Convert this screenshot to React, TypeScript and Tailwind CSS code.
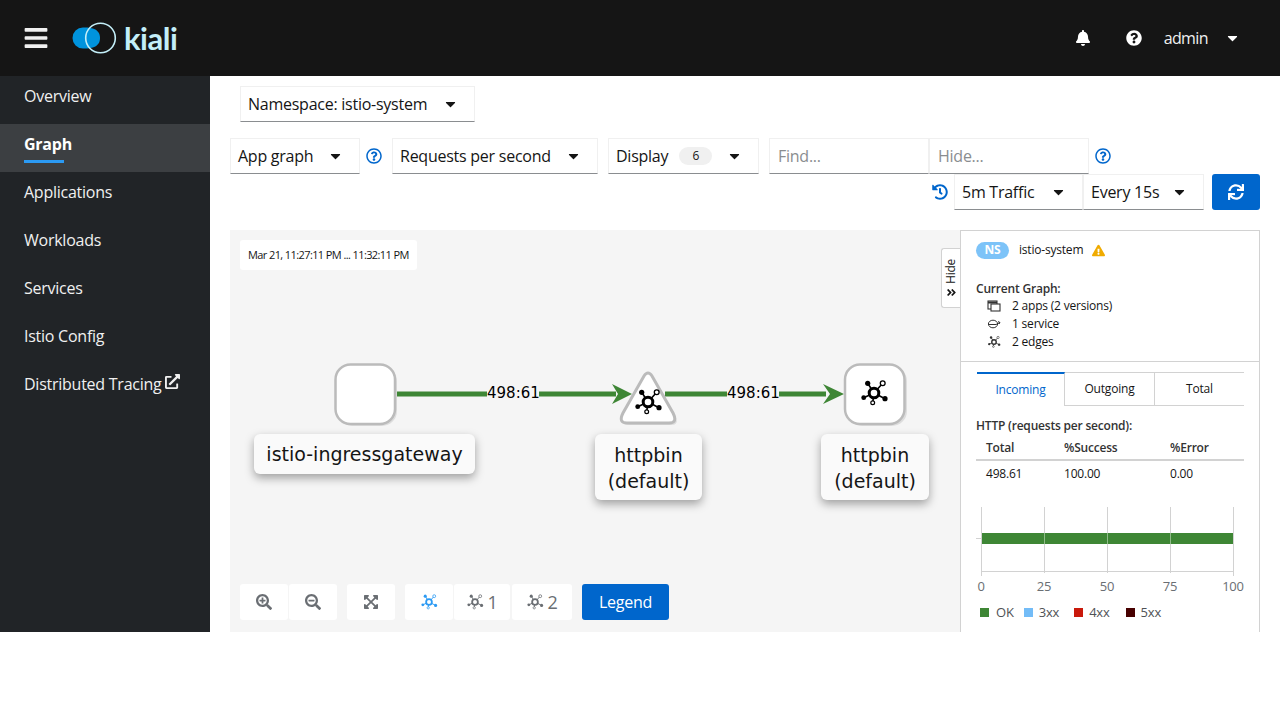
import React from 'react';
import { FaBars, FaBell, FaQuestionCircle, FaRegQuestionCircle, FaCaretDown, FaHistory, FaSync, FaSearchPlus, FaSearchMinus, FaExpandArrowsAlt, FaExternalLinkAlt, FaExclamationTriangle, FaAngleDoubleRight } from 'react-icons/fa';

function GraphIcon({ size = 30, color = '#000', className = '' }: { size?: number; color?: string; className?: string }) {
  return (
    <svg width={size} height={size} viewBox="-15 -15 30 30" className={className}>
      <g stroke={color} strokeWidth="1.6" fill="none">
        <path d="M-6.3-9.7L0 0M8.7-9.7L0 0M-10.3 4.7L0 0M11 5.7L0 0M-1.3 9.7L0 0" />
      </g>
      <circle r="4.8" fill="#fff" stroke={color} strokeWidth="3" />
      <circle cx="-6.3" cy="-9.7" r="2.6" fill={color} />
      <circle cx="8.7" cy="-9.7" r="2.4" fill="#fff" stroke={color} strokeWidth="1.3" />
      <circle cx="-10.3" cy="4.7" r="2.4" fill={color} />
      <circle cx="11" cy="5.7" r="2.6" fill={color} />
      <circle cx="-1.3" cy="9.7" r="1.9" fill="#fff" stroke={color} strokeWidth="1.2" />
    </svg>
  );
}

function Dropdown({ label, w, badge }: { label: string; w: string; badge?: string }) {
  return (
    <div className={`${w} h-9 flex items-center justify-between pl-[7px] pr-[17px] border border-[#f0f0f0] border-b-[#8a8d90] text-[16px] text-[#151515] bg-white`}>
      <span className="flex items-center whitespace-nowrap">
        {label}
        {badge && <span className="ml-[11px] w-[33px] h-[18px] rounded-full bg-[#f0f0f0] text-[12px] flex items-center justify-center">{badge}</span>}
      </span>
      <FaCaretDown className="text-[#151515] w-[13px] h-[16px]" />
    </div>
  );
}

const navItems = ['Overview', 'Graph', 'Applications', 'Workloads', 'Services', 'Istio Config'];

function Sidebar() {
  return (
    <nav className="w-[210px] shrink-0 bg-[#212427] text-[16px] text-[#f0f0f0]">
      {navItems.map((n) => (
        <div key={n} className={`h-12 pl-6 pt-[8px] ${n === 'Graph' ? 'bg-[#3c3f42] font-bold text-white' : ''}`}>
          <div className="relative h-6 leading-6">
            {n}
            {n === 'Graph' && <div className="absolute left-0 top-[28px] w-10 h-[3px] bg-[#2b9af3]" />}
          </div>
        </div>
      ))}
      <div className="h-12 pl-6 pt-[8px] flex items-start gap-[4px]">
        <span className="h-6 leading-6">Distributed Tracing</span>
        <FaExternalLinkAlt className="w-[15px] h-[15px] mt-[2px]" />
      </div>
    </nav>
  );
}

function Header() {
  return (
    <header className="h-[76px] bg-[#151515] flex items-center pl-6 pr-0 shrink-0">
      <FaBars className="text-[#f0f0f0] w-[24px] h-[26px]" />
      <div className="ml-[23px] flex items-center">
        <svg width="46" height="36" viewBox="71 20 46 36">
          <path d="M83 27.5C90 27.5 100 28 100 38C100 48 90 48.5 83 48.5A10.5 10.5 0 0 1 83 27.5Z" fill="#0093dd" />
          <circle cx="100.5" cy="38" r="14.8" fill="none" stroke="#c3eef8" strokeWidth="1.6" />
        </svg>
        <span className="ml-[7px] text-[31px] leading-none font-bold text-[#c3eef8] tracking-[-0.5px] font-['Lato',sans-serif]">kiali</span>
      </div>
      <div className="ml-auto flex items-center text-white">
        <FaBell className="w-[16px] h-[16px] mr-[35px]" />
        <FaQuestionCircle className="w-[16px] h-[16px] mr-[22px]" />
        <span className="text-[16px] mr-[18px] tracking-[-0.6px] text-[#f0f0f0]">admin</span>
        <FaCaretDown className="w-[13px] h-[16px] mr-[41px]" />
      </div>
    </header>
  );
}

function Toolbar() {
  return (
    <div className="pl-5 pr-5 shrink-0">
      <div className="pl-[10px] pt-[10px]">
        <Dropdown label="Namespace: istio-system" w="w-[235px]" />
      </div>
      <div className="mt-4 flex items-center">
        <Dropdown label="App graph" w="w-[130px]" />
        <FaRegQuestionCircle className="w-4 h-4 text-[#06c] ml-[6px]" />
        <div className="ml-[10px]"><Dropdown label="Requests per second" w="w-[206px]" /></div>
        <div className="ml-[10px]"><Dropdown label="Display" w="w-[151px]" badge="6" /></div>
        <div className="ml-[10px] w-[160px] h-9 border border-[#f0f0f0] border-b-[#8a8d90] pl-2 flex items-center text-[16px] text-[#8a8d90]">Find...</div>
        <div className="w-[160px] h-9 border border-[#f0f0f0] border-b-[#8a8d90] pl-2 flex items-center text-[16px] text-[#8a8d90]">Hide...</div>
        <FaRegQuestionCircle className="w-4 h-4 text-[#06c] ml-[6px]" />
      </div>
      <div className="flex items-center justify-end">
        <FaHistory className="w-4 h-4 text-[#06c] mr-[6px]" />
        <Dropdown label="5m Traffic" w="w-[129px]" />
        <Dropdown label="Every 15s" w="w-[121px]" />
        <div className="ml-2 w-12 h-9 rounded-[3px] bg-[#06c] flex items-center justify-center">
          <FaSync className="w-4 h-4 text-white" />
        </div>
      </div>
    </div>
  );
}

function Btn({ w, children }: { w: string; children: React.ReactNode }) {
  return <div className={`${w} h-9 bg-white rounded-[3px] flex items-center justify-center text-[#6a6e73] text-[18px]`}>{children}</div>;
}

function Label({ className, lines }: { className: string; lines: string[] }) {
  return (
    <div className={`absolute bg-[#fafafa] rounded-[6px] shadow-[0_4px_10px_rgba(0,0,0,0.35)] text-center text-[#151515] text-[19px] tracking-normal leading-[26px] font-['DejaVu_Sans',sans-serif] whitespace-nowrap ${className}`}>
      {lines.map((l) => <div key={l}>{l}</div>)}
    </div>
  );
}

function EdgeLabel({ className }: { className: string }) {
  return <div className={`absolute bg-[#f5f5f5] text-[#000] text-[15px] tracking-normal leading-[18px] text-center font-['DejaVu_Sans',sans-serif] ${className}`}>498:61</div>;
}

function Canvas() {
  return (
    <div className="relative w-[730px] h-full bg-[#f5f5f5] shrink-0 overflow-hidden">
      <div className="absolute left-[10px] top-[10px] w-[177px] h-[30px] bg-white rounded-[3px] flex items-center pl-2 text-[11px] tracking-[-0.6px] text-[#151515] whitespace-nowrap">Mar 21, 11:27:11 PM ... 11:32:11 PM</div>

      <svg className="absolute left-0 top-0" width="730" height="402" viewBox="230 230 730 402">
        <path d="M397 394H616M665 394H826" stroke="#3e8635" strokeWidth="5" fill="none" />
        <path d="M632 394L612 384L618 394L612 404Z" fill="#3e8635" />
        <path d="M844 394L823 384L830 394L823 404Z" fill="#3e8635" />
        <rect x="337" y="366" width="60" height="60" rx="15" fill="#ddd" />
        <rect x="335.5" y="364.5" width="59.5" height="59.5" rx="15" fill="#fff" stroke="#bbb" strokeWidth="2.5" />
        <path d="M646 378Q650 372 654 378L675 415Q680 425 671 425H629Q620 425 625 415Z" fill="#ddd" />
        <path d="M644 376Q648 370 652 376L673 413Q678 423 669 423H627Q618 423 623 413Z" fill="#fff" stroke="#bbb" strokeWidth="3" />
        <rect x="847" y="366" width="60" height="60" rx="15" fill="#ddd" />
        <rect x="845" y="364.5" width="59.5" height="59.5" rx="15" fill="#fff" stroke="#bbb" strokeWidth="2.5" />
      </svg>
      <GraphIcon className="absolute left-[403px] top-[157px]" />
      <GraphIcon className="absolute left-[629px] top-[148px]" />

      <EdgeLabel className="left-[257px] top-[154px] w-[52px]" />
      <EdgeLabel className="left-[497px] top-[154px] w-[52px]" />

      <Label className="left-[24px] top-[204px] w-[221px] h-[40px] pt-[7px]" lines={['istio-ingressgateway']} />
      <Label className="left-[365px] top-[204px] w-[107px] h-[66px] pt-[8px]" lines={['httpbin', '(default)']} />
      <Label className="left-[591px] top-[204px] w-[108px] h-[66px] pt-[8px]" lines={['httpbin', '(default)']} />

      <div className="absolute left-[10px] top-[354px] flex items-center">
        <Btn w="w-12"><FaSearchPlus className="w-4 h-4" /></Btn>
        <div className="ml-px"><Btn w="w-12"><FaSearchMinus className="w-4 h-4" /></Btn></div>
        <div className="ml-[10px]"><Btn w="w-12"><FaExpandArrowsAlt className="w-4 h-4" /></Btn></div>
        <div className="ml-[10px]"><Btn w="w-12"><GraphIcon size={18} color="#2b9af3" /></Btn></div>
        <div className="ml-px"><Btn w="w-14"><GraphIcon size={18} color="#6a6e73" /><span className="ml-[3px]">1</span></Btn></div>
        <div className="ml-[2px]"><Btn w="w-[60px]"><GraphIcon size={18} color="#6a6e73" /><span className="ml-[3px]">2</span></Btn></div>
        <div className="ml-[10px] w-[87px] h-9 bg-[#06c] rounded-[3px] text-white text-[16px] flex items-center justify-center">Legend</div>
      </div>

      <div className="absolute right-0 top-[18px] w-[19px] h-[60px] bg-white border border-r-0 border-[#d2d2d2] rounded-l-[3px] flex flex-col items-center justify-center pt-[1px]">
        <span className="text-[12px] text-[#151515] [writing-mode:vertical-rl] rotate-180 leading-none">Hide</span>
        <FaAngleDoubleRight className="w-[11px] h-[11px] mt-[3px] text-[#151515]" />
      </div>
    </div>
  );
}

function Panel() {
  const Row = ({ icon, text }: { icon: React.ReactNode; text: string }) => (
    <div className="h-[18px] flex items-center">
      <span className="w-[36px] pl-[11px] flex items-center">{icon}</span>
      <span>{text}</span>
    </div>
  );
  return (
    <aside className="w-[300px] h-full border border-b-0 border-[#d2d2d2] bg-white text-[12px] tracking-[-0.2px] text-[#151515] overflow-hidden">
      <div className="h-[130px] pl-[15px] pt-[10px]">
        <div className="flex items-center h-[18px]">
          <span className="w-[33px] h-[17px] rounded-full bg-[#7dc3f8] text-white font-bold text-[12px] flex items-center justify-center">NS</span>
          <span className="ml-[10px]">istio-system</span>
          <FaExclamationTriangle className="ml-[9px] w-[13px] h-[13px] text-[#f0ab00]" />
        </div>
        <div className="mt-[21px] font-semibold leading-[18px] text-[#333]">Current Graph:</div>
        <div className="-mt-px">
          <Row text="2 apps (2 versions)" icon={
            <svg width="14" height="14" viewBox="0 0 14 14" fill="none" stroke="#333" strokeWidth="1.1"><rect x="1" y="2" width="9" height="8" fill="#fff" /><path d="M1 3.5H10" strokeWidth="2" /><rect x="4" y="5" width="9" height="7" fill="#fff" /></svg>
          } />
          <Row text="1 service" icon={
            <svg width="14" height="12" viewBox="0 0 14 12" fill="none" stroke="#333" strokeWidth="1"><ellipse cx="6" cy="6" rx="4.6" ry="3.8" /><path d="M1 6.5H9M9 6.5L13 4.5M11 3.5L13 4.5L12 6" /></svg>
          } />
          <Row text="2 edges" icon={<GraphIcon size={14} color="#333" />} />
        </div>
      </div>
      <div className="border-t border-[#d2d2d2] pt-[10px] px-[15px]">
        <div className="flex w-[267px] ml-px h-[34px] text-center">
          <div className="w-[88px] border-t-2 border-[#06c] border-r border-r-[#d2d2d2] text-[#06c] flex items-center justify-center">Incoming</div>
          <div className="w-[90px] border-t border-b border-r border-[#d2d2d2] flex items-center justify-center">Outgoing</div>
          <div className="w-[89px] border-t border-b border-[#d2d2d2] flex items-center justify-center">Total</div>
        </div>
        <div className="mt-[11px] font-semibold leading-[18px] text-[#333]">HTTP (requests per second):</div>
        <div className="w-[268px] mt-[4px]">
          <div className="grid grid-cols-[78px_106px_1fr] pl-[10px] h-[22px] border-b-2 border-[#d2d2d2] font-semibold items-center text-[#333] pb-[3px]">
            <span>Total</span><span>%Success</span><span>%Error</span>
          </div>
          <div className="grid grid-cols-[78px_106px_1fr] pl-[10px] h-[26px] items-center">
            <span>498.61</span><span>100.00</span><span>0.00</span>
          </div>
        </div>
        <svg className="mt-[19px] -ml-[1px] block" width="276" height="92" viewBox="975 506 276 92">
          <path d="M981.5 507V576M1044.5 507V573M1107.5 507V573M1170.5 507V573M1233.5 507V576M976 538.5H981M981 571.5H1233.5" stroke="#d2d2d2" strokeWidth="1" fill="none" />
          <rect x="982" y="533" width="251" height="11" fill="#3e8635" />
          <path d="M1044.5 533V544M1107.5 533V544M1170.5 533V544" stroke="#8fbc89" strokeWidth="1" />
          <g fill="#6a6e73" fontSize="13" textAnchor="middle">
            <text x="981" y="591">0</text>
            <text x="1044" y="591">25</text>
            <text x="1107" y="591">50</text>
            <text x="1170" y="591">75</text>
            <text x="1233" y="591">100</text>
          </g>
        </svg>
        <div className="mt-[5px] flex items-center text-[13px] text-[#4f5255] leading-[18px]">
          <span className="ml-[4px] w-[9px] h-[9px] bg-[#3e8635]" /><span className="ml-[7px]">OK</span>
          <span className="ml-[10px] w-[9px] h-[9px] bg-[#73bcf7]" /><span className="ml-[6px]">3xx</span>
          <span className="ml-[15px] w-[9px] h-[9px] bg-[#c9190b]" /><span className="ml-[6px]">4xx</span>
          <span className="ml-[16px] w-[9px] h-[9px] bg-[#470000]" /><span className="ml-[6px]">5xx</span>
        </div>
      </div>
    </aside>
  );
}

export default function App() {
  return (
    <div className="w-[1280px] h-[708px] bg-white flex flex-col overflow-hidden tracking-[-0.25px] font-['Open_Sans',sans-serif]">
      <Header />
      <div className="h-[556px] flex">
        <Sidebar />
        <main className="flex-1 flex flex-col min-w-0">
          <Toolbar />
          <div className="mt-5 ml-5 flex flex-1 min-h-0">
            <Canvas />
            <Panel />
          </div>
        </main>
      </div>
    </div>
  );
}
